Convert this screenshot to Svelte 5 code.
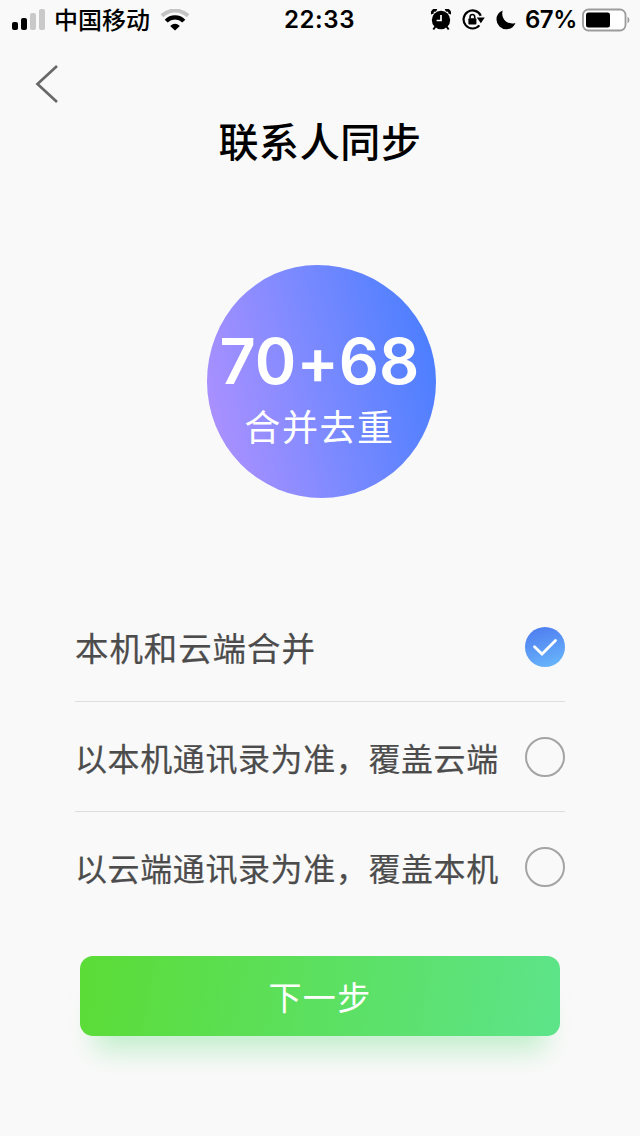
<script>
  const options = [
    { id: 'merge', label: '本机和云端合并' },
    { id: 'local', label: '以本机通讯录为准，覆盖云端' },
    { id: 'cloud', label: '以云端通讯录为准，覆盖本机' }
  ];
  let selected = $state('merge');
</script>

<main class="screen">
  <header class="status">
    <div class="side left">
      <svg class="signal" width="34" height="22" viewBox="0 0 34 22">
        <rect x="0" y="13" width="6" height="8" rx="2" fill="#000" />
        <rect x="9" y="9" width="6" height="12" rx="2" fill="#000" />
        <rect x="18" y="4" width="6" height="17" rx="2" fill="#c9c9c9" />
        <rect x="27" y="0" width="6" height="21" rx="2" fill="#c9c9c9" />
      </svg>
      <span class="carrier">中国移动</span>
      <svg class="wifi" width="30" height="22" viewBox="0 0 30 22">
        <path d="M1.9 6.8A19 19 0 0 1 28.1 6.8" fill="none" stroke="#c4c4c4" stroke-width="4" />
        <path d="M6.2 12.1A12.3 12.3 0 0 1 23.8 12.1" fill="none" stroke="#000" stroke-width="4.2" />
        <path d="M15 21.4L10.2 17Q15 12.6 19.8 17Z" fill="#000" />
      </svg>
    </div>
    <span class="time">22:33</span>
    <div class="side right">
      <svg class="alarm" width="20" height="22" viewBox="0 0 20 22">
        <path d="M1.4 5A3 3 0 0 1 5.6 1.4M14.4 1.4A3 3 0 0 1 18.6 5" fill="none" stroke="#000" stroke-width="2.8" />
        <path d="M4.5 17.5L2.3 20.5M15.5 17.5L17.7 20.5" stroke="#000" stroke-width="2" />
        <circle cx="10" cy="11" r="9.2" fill="#000" />
        <path d="M10 6V11.5H5.6" fill="none" stroke="#fff" stroke-width="1.7" />
      </svg>
      <svg class="lock" width="23" height="22" viewBox="0 0 23 22">
        <path d="M17.4 16.4A9 9 0 1 1 18.8 6.8" fill="none" stroke="#000" stroke-width="2.2" />
        <path d="M14.8 8.6H22.8L18.8 14.2Z" fill="#000" />
        <rect x="6.4" y="9.2" width="8" height="6.4" rx="1" fill="#000" />
        <path d="M8.1 9.6V7.8A2.3 2.3 0 0 1 12.7 7.8V9.6" fill="none" stroke="#000" stroke-width="1.6" />
      </svg>
      <svg class="moon" width="20" height="20" viewBox="0 0 20 20">
        <path d="M6.7.5C4.5 7.4 10.3 15.5 19.5 12.9A10 10 0 0 1 10.4 19.2A9.7 9.7 0 0 1 .5 9.7A9.8 9.8 0 0 1 6.7.5Z" fill="#000" />
      </svg>
      <span class="percent">67%</span>
      <svg class="battery" width="48" height="24" viewBox="0 0 48 24">
        <rect x="1" y="1.5" width="42.5" height="21" rx="5.5" fill="#fff" stroke="#9c9c9c" stroke-width="1.8" />
        <rect x="4" y="4.5" width="24" height="15" rx="2.5" fill="#000" />
        <path d="M45.5 8.5Q49.5 12 45.5 15.5Z" fill="#9c9c9c" />
      </svg>
    </div>
  </header>

  <nav>
    <button class="back" aria-label="返回">
      <svg width="24" height="40" viewBox="0 0 24 40">
        <path d="M22 2L2.5 20L22 38" fill="none" stroke="#686868" stroke-width="2.7" />
      </svg>
    </button>
  </nav>

  <h1>联系人同步</h1>

  <section class="bubble">
    <strong>70+68</strong>
    <span>合并去重</span>
  </section>

  <ul class="options">
    {#each options as option, i (option.id)}
      <li>
        <button class="option" class:first={i === 0} onclick={() => (selected = option.id)}>
          <span>{option.label}</span>
          {#if selected === option.id}
            <svg width="40" height="40" viewBox="0 0 40 40">
              <defs>
                <linearGradient id="tick" x1="0.3" y1="0" x2="0.6" y2="1">
                  <stop offset="0" stop-color="#4f7df0" />
                  <stop offset="1" stop-color="#67b4fb" />
                </linearGradient>
              </defs>
              <circle cx="20" cy="20" r="20" fill="url(#tick)" />
              <path d="M9.5 19.8L17 27L30.5 13.5" fill="none" stroke="#fff" stroke-width="2.8" stroke-linecap="round" />
            </svg>
          {:else}
            <i class="radio"></i>
          {/if}
        </button>
      </li>
    {/each}
  </ul>

  <button class="next">下一步</button>
</main>

<style>
  :global(body) {
    background: #f9f9f9;
  }
  .screen {
    box-sizing: border-box;
    width: 640px;
    height: 1136px;
    overflow: hidden;
    display: flex;
    flex-direction: column;
    background: #f9f9f9;
    font-family: Inter, "Noto Sans CJK SC", sans-serif;
    color: #000;
  }
  button {
    border: 0;
    padding: 0;
    background: none;
    font: inherit;
    color: inherit;
    text-align: left;
  }
  svg {
    display: block;
    flex: none;
  }
  .status {
    height: 40px;
    flex: none;
    display: grid;
    grid-template-columns: 1fr auto 1fr;
    align-items: center;
    padding: 0 10px 0 12px;
    line-height: 40px;
  }
  .side {
    display: flex;
    align-items: center;
  }
  .right {
    justify-content: flex-end;
  }
  .carrier {
    margin-left: 8px;
    padding-top: 1px;
    font-size: 24px;
    font-weight: 500;
    line-height: 39px;
    white-space: nowrap;
  }
  .wifi {
    margin-left: 10px;
  }
  .time {
    margin-right: 3px;
    font-size: 24px;
    font-weight: 600;
    letter-spacing: 0.6px;
  }
  .lock {
    margin-left: 11px;
  }
  .moon {
    margin-left: 11px;
  }
  .percent {
    margin: 0 5px 0 9px;
    font-size: 24px;
    font-weight: 600;
    letter-spacing: -0.4px;
  }
  nav {
    height: 62px;
    padding: 24px 0 0 35px;
    box-sizing: border-box;
    flex: none;
  }
  h1 {
    margin: 11px 0 0;
    height: 60px;
    line-height: 60px;
    flex: none;
    text-align: center;
    font-size: 40px;
    font-weight: 500;
    letter-spacing: 0.6px;
  }
  .bubble {
    width: 229px;
    height: 233px;
    flex: none;
    margin: 92px 0 0 207px;
    box-sizing: border-box;
    padding: 62px 4px 0 0;
    border-radius: 48% 52% 50% 50% / 50%;
    background: linear-gradient(76deg, #aa90ff 8%, #7d8aff 48%, #4a7eff 94%);
    color: #fff;
    display: flex;
    flex-direction: column;
    align-items: center;
  }
  .bubble strong {
    font-size: 63px;
    line-height: 68px;
    font-weight: 600;
    font-feature-settings: "calt" 0;
    white-space: nowrap;
  }
  .bubble span {
    font-size: 36px;
    line-height: 54px;
    margin-top: 6px;
    letter-spacing: 1.6px;
  }
  .options {
    list-style: none;
    margin: 94px 75px 0;
    padding: 0;
  }
  .options li + li {
    border-top: 1px solid #dedede;
  }
  .option {
    width: 100%;
    height: 109px;
    display: flex;
    align-items: center;
    justify-content: space-between;
    font-size: 32px;
    letter-spacing: 0.6px;
    -webkit-text-stroke: 0.2px currentColor;
    color: #4c4c4c;
    white-space: nowrap;
  }
  .option.first {
    font-size: 33.5px;
    letter-spacing: 0.9px;
  }
  .radio {
    box-sizing: border-box;
    width: 40px;
    height: 40px;
    flex: none;
    border: 2px solid #a4a4a4;
    border-radius: 50%;
  }
  .next {
    width: 480px;
    height: 80px;
    flex: none;
    margin: 35px auto 0;
    border-radius: 13px;
    background: linear-gradient(100deg, #5bdc36, #5de48a);
    box-shadow: 0 30px 26px -15px rgba(93, 220, 120, 0.34);
    color: #fff;
    text-align: center;
    font-size: 33px;
    letter-spacing: 1.4px;
  }
</style>
